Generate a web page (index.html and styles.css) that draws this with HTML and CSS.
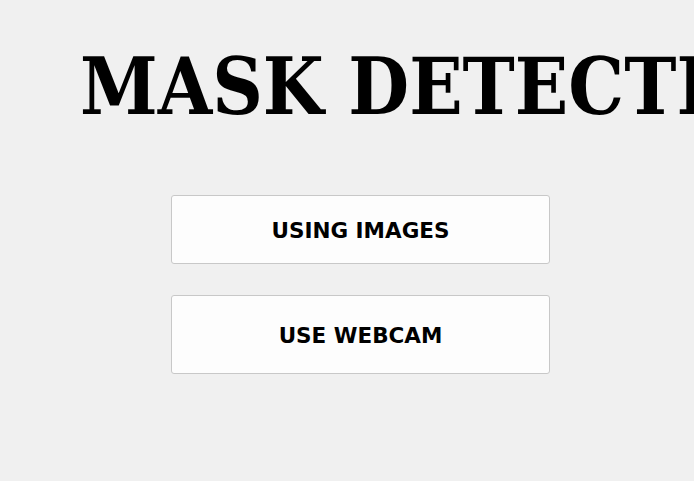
FILE: index.html
```html
<!DOCTYPE html>
<html>
<head>
<meta charset="utf-8">
<link rel="stylesheet" href="styles.css">
</head>
<body>
<div class="app">
  <h1 class="title">MASK DETECTION</h1>
  <div class="buttons">
    <button class="btn btn-images">USING IMAGES</button>
    <button class="btn btn-webcam">USE WEBCAM</button>
  </div>
</div>
</body>
</html>
```
FILE: styles.css
```css
html, body {
  margin: 0;
  padding: 0;
  background: #f0f0f0;
  width: 694px;
  height: 481px;
  overflow: hidden;
}
.app {
  display: flex;
  flex-direction: column;
}
.title {
  margin: 0 0 0 80px;
  padding-top: 40px;
  font-family: "DejaVu Serif", "Liberation Serif", serif;
  font-stretch: condensed;
  font-weight: bold;
  font-size: 78px;
  line-height: 94px;
  white-space: nowrap;
  color: #000;
}
.buttons {
  display: flex;
  flex-direction: column;
  gap: 31px;
  padding: 61px 0 0 171px;
}
.btn {
  width: 379px;
  background: #fdfdfd;
  border: 1px solid #c8c8c8;
  border-radius: 3px;
  font-family: "DejaVu Sans", Verdana, sans-serif;
  font-weight: bold;
  font-size: 21.5px;
  color: #000;
  padding: 2px 0 0 0;
}
.btn-images { height: 69px; }
.btn-webcam { height: 79px; }
```
